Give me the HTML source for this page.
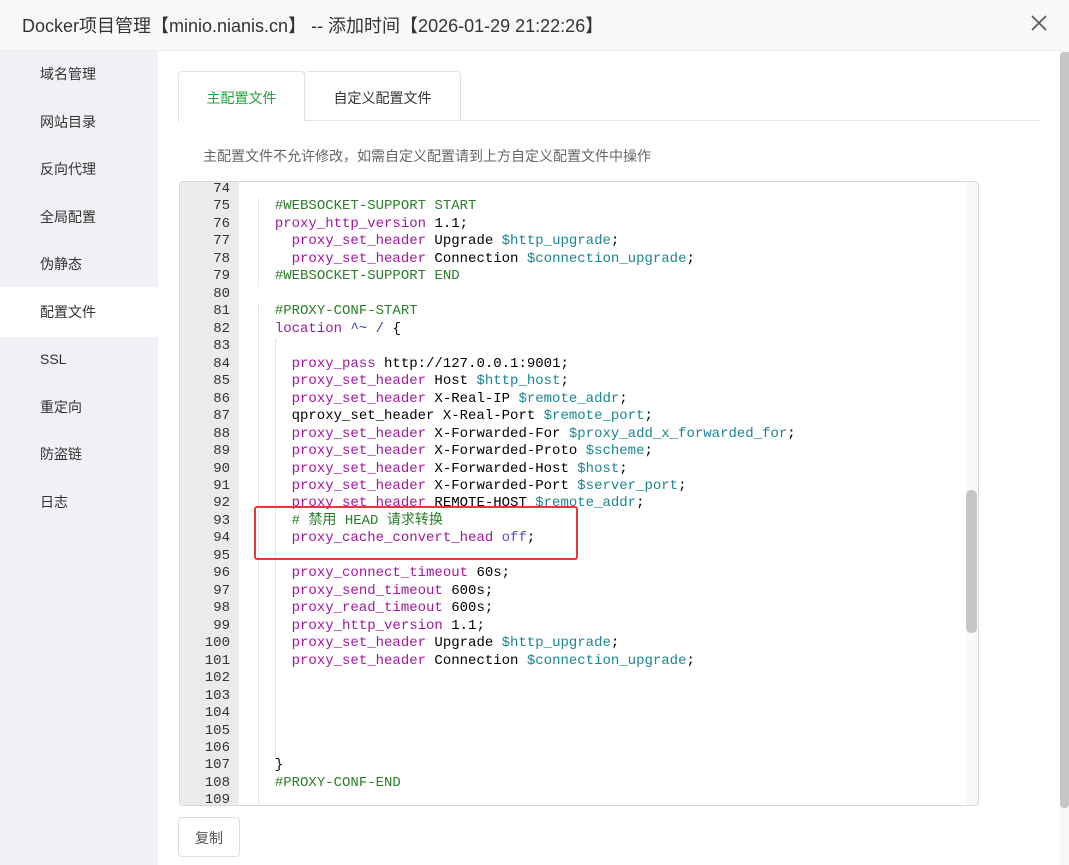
<!DOCTYPE html>
<html><head><meta charset="utf-8"><style>
*{margin:0;padding:0;box-sizing:border-box}
body{width:1069px;height:865px;overflow:hidden;background:#fff;font-family:"Liberation Sans","Noto Sans CJK SC",sans-serif;position:relative}
.hdr{position:absolute;left:0;top:0;width:1069px;height:51px;background:#f8f8f8;border-bottom:1px solid #eee}
.hdr .t{position:absolute;left:22px;top:12px;font-size:18px;color:#333;white-space:nowrap}
.x{position:absolute;left:1031px;top:15px;width:16px;height:16px}
.side{position:absolute;left:0;top:51px;width:158px;height:814px;background:#f0f1f5}
.side div{position:absolute;left:0;width:158px;height:50px;line-height:50px;padding-left:40px;font-size:14px;color:#333}
.side div.a{background:#fff}
.tabs{position:absolute;left:178px;top:71px;height:50px}
.tabline{position:absolute;left:178px;top:120px;width:862px;height:1px;background:#e6e6ea}
.tab{position:absolute;top:0;height:50px;line-height:52px;text-align:center;font-size:14px;color:#333;border:1px solid #e2e2e8;border-bottom:none;border-radius:4px 4px 0 0;background:#fff;z-index:2}
.note{position:absolute;left:203px;top:146px;font-size:14px;color:#666}
.ed{position:absolute;left:179px;top:181px;width:800px;height:625px;border:1px solid #d8d8de;border-radius:4px;overflow:hidden;background:#fff}
.gut{position:absolute;left:0;top:0;width:59px;height:100%;background:#ebebeb}
.code{position:absolute;left:0;top:-1px;font-family:"Liberation Mono","Noto Sans CJK SC",monospace;font-size:14px;line-height:17.47px;white-space:pre}
.ln{display:block;height:17.47px}
.n{display:inline-block;width:50px;text-align:right;color:#333;margin-right:28px}
.k{color:#a3169e}.c{color:#2a7e2a}.v{color:#1b8591}.b{color:#3a3ab0}.o{color:#5050e0}
.g{position:absolute;width:0;border-left:1px dotted #ccc}
.sb{position:absolute;left:786px;top:0;width:12px;height:100%;background:#f8f8f8}
.th{position:absolute;left:786px;top:308px;width:11px;height:143px;background:#c6c6c6;border-radius:5px}
.red{position:absolute;left:254px;top:506px;width:324px;height:54px;border:2px solid #e8383d;border-radius:3px}
.btn{position:absolute;left:178px;top:817px;width:62px;height:40px;border:1px solid #ddd;border-radius:4px;text-align:center;line-height:40px;font-size:14px;color:#555;background:#fff}
.osb{position:absolute;left:1060px;top:51px;width:9px;height:814px;background:#f8f8f8}
.oth{position:absolute;left:1060px;top:52px;width:9px;height:756px;background:#c6c6c6;border-radius:4px 0 4px 4px}
</style></head><body>
<div class="hdr"><div class="t">Docker项目管理【minio.nianis.cn】 -- 添加时间【2026-01-29 21:22:26】</div>
<svg class="x" viewBox="0 0 16 16"><path d="M1 1L15 15M15 1L1 15" stroke="#555" stroke-width="1.6"/></svg></div>
<div class="side">
<div style="top:-2px">域名管理</div><div style="top:46px">网站目录</div><div style="top:93px">反向代理</div><div style="top:141px">全局配置</div><div style="top:188px">伪静态</div><div class="a" style="top:236px">配置文件</div><div style="top:283px">SSL</div><div style="top:331px">重定向</div><div style="top:378px">防盗链</div><div style="top:426px">日志</div>
</div>
<div class="tabline"></div>
<div class="tabs"><div class="tab" style="left:0;width:127px;color:#20a53a;height:51px">主配置文件</div><div class="tab" style="left:126px;width:157px;height:49px">自定义配置文件</div></div>
<div class="note">主配置文件不允许修改，如需自定义配置请到上方自定义配置文件中操作</div>
<div class="ed"><div class="gut"></div>
<div class="g" style="left:78px;top:17px;height:87px"></div>
<div class="g" style="left:78px;top:122px;height:500px"></div>
<div class="g" style="left:95px;top:157px;height:420px"></div>
<div class="code"><span class="ln"><span class="n">74</span></span><span class="ln"><span class="n">75</span>  <span class="c">#WEBSOCKET-SUPPORT START</span></span><span class="ln"><span class="n">76</span>  <span class="k">proxy_http_version</span> 1.1;</span><span class="ln"><span class="n">77</span>    <span class="k">proxy_set_header</span> Upgrade <span class="v">$http_upgrade</span>;</span><span class="ln"><span class="n">78</span>    <span class="k">proxy_set_header</span> Connection <span class="v">$connection_upgrade</span>;</span><span class="ln"><span class="n">79</span>  <span class="c">#WEBSOCKET-SUPPORT END</span></span><span class="ln"><span class="n">80</span></span><span class="ln"><span class="n">81</span>  <span class="c">#PROXY-CONF-START</span></span><span class="ln"><span class="n">82</span>  <span class="k">location</span> <span class="b">^~ /</span> {</span><span class="ln"><span class="n">83</span></span><span class="ln"><span class="n">84</span>    <span class="k">proxy_pass</span> http://127.0.0.1:9001;</span><span class="ln"><span class="n">85</span>    <span class="k">proxy_set_header</span> Host <span class="v">$http_host</span>;</span><span class="ln"><span class="n">86</span>    <span class="k">proxy_set_header</span> X-Real-IP <span class="v">$remote_addr</span>;</span><span class="ln"><span class="n">87</span>    qproxy_set_header X-Real-Port <span class="v">$remote_port</span>;</span><span class="ln"><span class="n">88</span>    <span class="k">proxy_set_header</span> X-Forwarded-For <span class="v">$proxy_add_x_forwarded_for</span>;</span><span class="ln"><span class="n">89</span>    <span class="k">proxy_set_header</span> X-Forwarded-Proto <span class="v">$scheme</span>;</span><span class="ln"><span class="n">90</span>    <span class="k">proxy_set_header</span> X-Forwarded-Host <span class="v">$host</span>;</span><span class="ln"><span class="n">91</span>    <span class="k">proxy_set_header</span> X-Forwarded-Port <span class="v">$server_port</span>;</span><span class="ln"><span class="n">92</span>    <span class="k">proxy_set_header</span> REMOTE-HOST <span class="v">$remote_addr</span>;</span><span class="ln"><span class="n">93</span>    <span class="c"># 禁用 HEAD 请求转换</span></span><span class="ln"><span class="n">94</span>    <span class="k">proxy_cache_convert_head</span> <span class="o">off</span>;</span><span class="ln"><span class="n">95</span></span><span class="ln"><span class="n">96</span>    <span class="k">proxy_connect_timeout</span> 60s;</span><span class="ln"><span class="n">97</span>    <span class="k">proxy_send_timeout</span> 600s;</span><span class="ln"><span class="n">98</span>    <span class="k">proxy_read_timeout</span> 600s;</span><span class="ln"><span class="n">99</span>    <span class="k">proxy_http_version</span> 1.1;</span><span class="ln"><span class="n">100</span>    <span class="k">proxy_set_header</span> Upgrade <span class="v">$http_upgrade</span>;</span><span class="ln"><span class="n">101</span>    <span class="k">proxy_set_header</span> Connection <span class="v">$connection_upgrade</span>;</span><span class="ln"><span class="n">102</span></span><span class="ln"><span class="n">103</span></span><span class="ln"><span class="n">104</span></span><span class="ln"><span class="n">105</span></span><span class="ln"><span class="n">106</span></span><span class="ln"><span class="n">107</span>  }</span><span class="ln"><span class="n">108</span>  <span class="c">#PROXY-CONF-END</span></span><span class="ln"><span class="n">109</span></span></div>
<div class="sb"></div><div class="th"></div>
</div>
<div class="red"></div>
<div class="btn">复制</div>
<div class="osb"></div><div class="oth"></div>
</body></html>
